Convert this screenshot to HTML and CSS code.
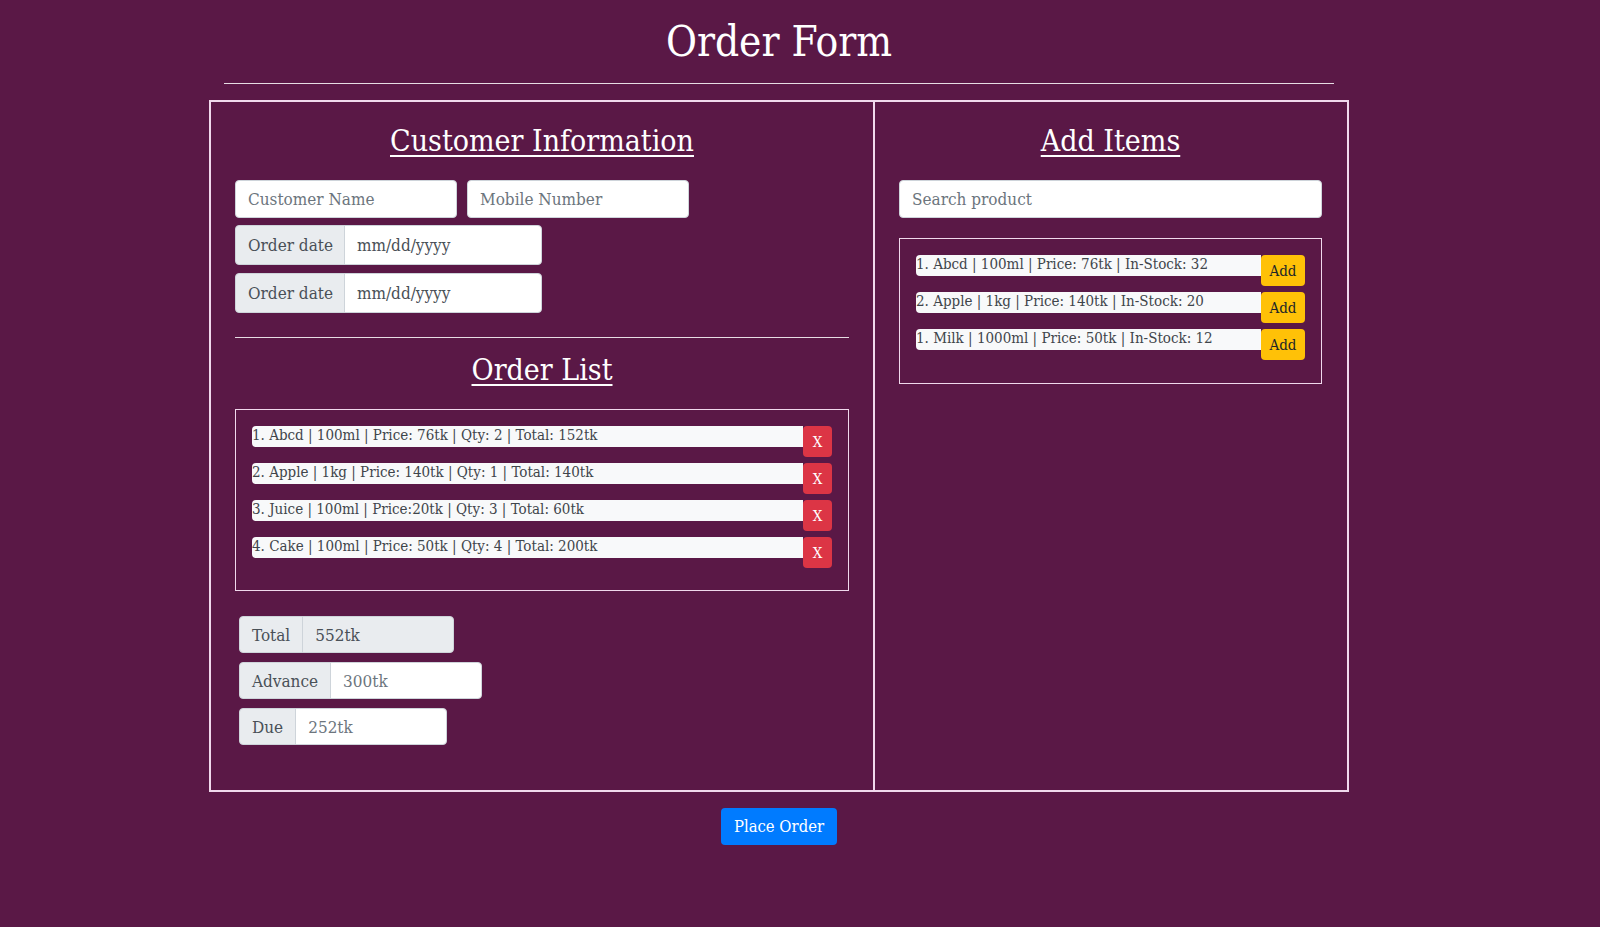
FILE: index.html
```html
<!DOCTYPE html>
<html lang="en">
<head>
<meta charset="utf-8">
<title>Order Form</title>
<link rel="stylesheet" href="styles.css">
</head>
<body>
<div class="page">
  <h1 class="title">Order Form</h1>
  <hr class="title-rule">
  <div class="board">
    <section class="col col-left">
      <h2 class="heading">Customer Information</h2>
      <div class="field-row">
        <input class="control name-input" type="text" placeholder="Customer Name">
        <input class="control name-input" type="text" placeholder="Mobile Number">
      </div>
      <div class="group date-group">
        <span class="addon">Order date</span>
        <input class="control date-input" type="text" placeholder="mm/dd/yyyy">
      </div>
      <div class="group date-group">
        <span class="addon">Order date</span>
        <input class="control date-input" type="text" placeholder="mm/dd/yyyy">
      </div>
      <hr class="col-rule">
      <h2 class="heading heading-list">Order List</h2>
      <div class="list-box">
        <div class="list-row"><span class="bar">1. Abcd | 100ml | Price: 76tk | Qty: 2 | Total: 152tk</span><button class="btn-remove">X</button></div>
        <div class="list-row"><span class="bar">2. Apple | 1kg | Price: 140tk | Qty: 1 | Total: 140tk</span><button class="btn-remove">X</button></div>
        <div class="list-row"><span class="bar">3. Juice | 100ml | Price:20tk | Qty: 3 | Total: 60tk</span><button class="btn-remove">X</button></div>
        <div class="list-row"><span class="bar">4. Cake | 100ml | Price: 50tk | Qty: 4 | Total: 200tk</span><button class="btn-remove">X</button></div>
      </div>
      <div class="totals">
        <div class="group sum-group">
          <span class="addon">Total</span>
          <input class="control sum-input readonly" type="text" value="552tk" readonly>
        </div>
        <div class="group sum-group">
          <span class="addon">Advance</span>
          <input class="control sum-input" type="text" placeholder="300tk">
        </div>
        <div class="group sum-group">
          <span class="addon">Due</span>
          <input class="control sum-input" type="text" placeholder="252tk">
        </div>
      </div>
    </section>
    <section class="col col-right">
      <h2 class="heading">Add Items</h2>
      <input class="control search-input" type="text" placeholder="Search product">
      <div class="list-box product-box">
        <div class="list-row"><span class="bar">1. Abcd | 100ml | Price: 76tk | In-Stock: 32</span><button class="btn-add">Add</button></div>
        <div class="list-row"><span class="bar">2. Apple | 1kg | Price: 140tk | In-Stock: 20</span><button class="btn-add">Add</button></div>
        <div class="list-row"><span class="bar">1. Milk | 1000ml | Price: 50tk | In-Stock: 12</span><button class="btn-add">Add</button></div>
      </div>
    </section>
  </div>
  <div class="actions">
    <button class="btn-order">Place Order</button>
  </div>
</div>
</body>
</html>
```

FILE: styles.css
```css
* { box-sizing: border-box; }

html, body {
  margin: 0;
  background: #5a1846;
}

body {
  padding-right: 42px;
  font-family: "DejaVu Serif", "Liberation Serif", serif;
  font-stretch: condensed;
  color: #495057;
  font-size: 17px;
}

.page {
  width: 1140px;
  margin: 0 auto;
  padding-bottom: 60px;
}

.title {
  margin: 0;
  padding-top: 15px;
  height: 69px;
  text-align: center;
  font-weight: normal;
  font-size: 42px;
  line-height: 54px;
  color: #fff;
}

.title-rule {
  margin: 14px 15px 0;
  border: 0;
  border-top: 1px solid rgba(255, 255, 255, 0.85);
  height: 0;
}

.board {
  margin-top: 16px;
  display: grid;
  grid-template-columns: 664px 1fr;
  border: 2px solid #f0d9ec;
}

.col {
  padding: 19px 24px 36px;
}

.col-left {
  border-right: 2px solid #f0d9ec;
}

.col-right {
  padding-right: 25px;
}

.heading {
  margin: 0 0 19px;
  height: 40px;
  line-height: 40px;
  text-align: center;
  font-weight: normal;
  font-size: 30px;
  color: #fff;
  text-decoration: underline;
  text-decoration-thickness: 2px;
  text-underline-offset: 4px;
}

.control {
  font-family: inherit;
  font-stretch: inherit;
  font-size: 17px;
  color: #495057;
  background: #fff;
  border: 1px solid #ced4da;
  border-radius: 4px;
  padding: 0 12px;
  height: 38px;
  outline: none;
}

.control::placeholder {
  color: #6c757d;
}

.field-row {
  display: flex;
  gap: 10px;
  margin-bottom: 7px;
}

.name-input {
  width: 222px;
}

.group {
  display: flex;
}

.addon {
  display: flex;
  align-items: center;
  padding: 0 12px;
  background: #e9ecef;
  border: 1px solid #ced4da;
  border-radius: 4px 0 0 4px;
  color: #495057;
  white-space: nowrap;
}

.group .control {
  border-radius: 0 4px 4px 0;
  margin-left: -1px;
}

.date-group {
  height: 40px;
  margin-bottom: 8px;
}

.date-group .addon {
  padding: 0 11px 0 12px;
}

.date-group .control {
  height: 40px;
  width: 198px;
}

.date-input::placeholder {
  color: #495057;
}

.col-rule {
  margin: 24px 0 12px;
  border: 0;
  border-top: 1px solid rgba(255, 255, 255, 0.85);
  height: 0;
}

.heading-list {
  margin-bottom: 19px;
}

.list-box {
  border: 1px solid #f0d9ec;
  padding: 16px 16px 16px;
}

.product-box {
  padding-bottom: 17px;
}

.list-row {
  display: flex;
  align-items: flex-start;
  margin-bottom: 6px;
}

.bar {
  flex: 1;
  height: 21px;
  line-height: 19px;
  background: #f8f9fa;
  border-radius: 4px 0 0 4px;
  font-size: 15px;
  color: #3f454b;
  white-space: nowrap;
  overflow: hidden;
}

.btn-remove,
.btn-add,
.btn-order {
  font-family: inherit;
  font-stretch: inherit;
  border: 0;
  border-radius: 4px;
  cursor: pointer;
  padding: 0;
}

.btn-remove {
  width: 29px;
  height: 31px;
  background: #dc3545;
  color: #fff;
  font-size: 15px;
}

.btn-add {
  width: 44px;
  height: 31px;
  background: #ffc107;
  color: #212529;
  font-size: 15px;
}

.totals {
  margin-top: 25px;
  padding-left: 4px;
}

.sum-group {
  height: 37px;
  margin-bottom: 9px;
}

.sum-group .control {
  height: 37px;
  width: 152px;
}

.sum-input.readonly {
  background: #e9ecef;
}

.search-input {
  width: 100%;
  display: block;
  margin-bottom: 20px;
}

.actions {
  display: flex;
  justify-content: center;
  margin-top: 16px;
}

.btn-order {
  width: 116px;
  height: 37px;
  background: #007bff;
  color: #fff;
  font-size: 16.5px;
}
```
